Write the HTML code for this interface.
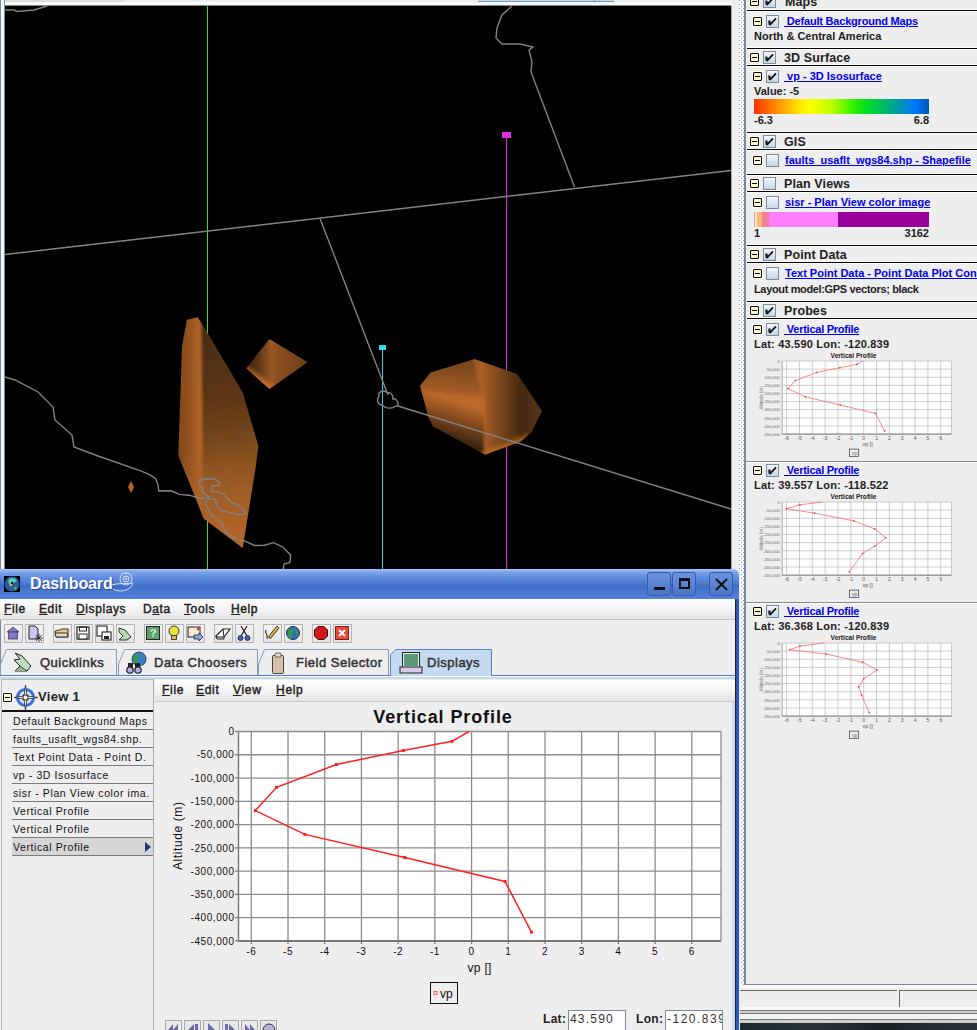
<!DOCTYPE html>
<html><head><meta charset="utf-8">
<style>
*{box-sizing:border-box;margin:0;padding:0}
html,body{width:977px;height:1030px;overflow:hidden;background:#eeeeee;font-family:"Liberation Sans",sans-serif;position:relative}
.a{position:absolute}
.t{position:absolute;white-space:nowrap;line-height:1}
.hl{position:absolute;left:746px;width:231px;height:2px;background:#222}
.mb{position:absolute;width:9px;height:9px;background:#fffcc8;border:1px solid #000;border-radius:1px;box-shadow:0 0 0 1px #fff}
.mb:after{content:"";position:absolute;left:1px;top:3px;width:5px;height:1px;background:#000}
.cb{position:absolute;width:13px;height:13px;border:1px solid #7d8c9b;background:linear-gradient(#f4f8fc,#c4d6e8)}
.ck:after{content:"";position:absolute;left:2px;top:2px;width:8px;height:8px;background:none}
.hdr{font-size:12.5px;font-weight:bold;color:#222;letter-spacing:0.1px}
.lnk{font-size:11px;font-weight:bold;color:#0000f0;text-decoration:underline}
.mnu{font-size:12px;font-weight:normal;-webkit-text-stroke:0.45px #222;color:#222;letter-spacing:0.6px}
.mnu2{font-size:12px;font-weight:normal;-webkit-text-stroke:0.45px #222;color:#222;letter-spacing:0.7px}
.tab{font-size:13px;font-weight:normal;-webkit-text-stroke:0.5px #333;color:#333;letter-spacing:0.5px}
.li{font-size:10.5px;color:#111;letter-spacing:0.6px}
.dsc{font-size:11px;font-weight:bold;color:#222}
</style></head><body>

<!-- top strip -->
<div class="a" style="left:0;top:0;width:746px;height:6px;background:#eeeeee"></div>
<div class="a" style="left:0;top:2px;width:746px;height:3px;background:#f8f8f8"></div>
<div class="a" style="left:0;top:0;width:125px;height:2px;background:#dcdcdc"></div>
<div class="a" style="left:478px;top:0;width:136px;height:2px;background:#c6d6ea;border-bottom:1px solid #7a9ac0"></div>
<div class="a" style="left:594px;top:0;width:1px;height:2px;background:#7a9ac0"></div>
<!-- left edge -->
<div class="a" style="left:0;top:0;width:5px;height:569px;background:#f6f6f6;border-right:1px solid #8a8a8a"></div>
<div class="a" style="left:0;top:0;width:1px;height:569px;background:#7a8a9a"></div>
<div class="a" style="left:4px;top:5px;width:727px;height:1px;background:#8a8a8a"></div>

<!-- 3D view -->
<svg class="a" style="left:5px;top:6px" width="726" height="563" viewBox="5 6 726 563">
<defs>
<linearGradient id="b1l" gradientUnits="userSpaceOnUse" x1="178" y1="0" x2="203" y2="0"><stop offset="0" stop-color="#80481a"/><stop offset="0.6" stop-color="#9c5822"/><stop offset="0.92" stop-color="#b86828"/><stop offset="1" stop-color="#a86026"/></linearGradient>
<linearGradient id="b1r" gradientUnits="userSpaceOnUse" x1="205" y1="340" x2="240" y2="545"><stop offset="0" stop-color="#4a2c12"/><stop offset="0.3" stop-color="#5e3616"/><stop offset="0.6" stop-color="#84501e"/><stop offset="1" stop-color="#b8682a"/></linearGradient>
<linearGradient id="b1b" gradientUnits="userSpaceOnUse" x1="0" y1="440" x2="0" y2="545"><stop offset="0" stop-color="#a05a24" stop-opacity="0"/><stop offset="1" stop-color="#b4662a" stop-opacity="0.85"/></linearGradient>
<linearGradient id="b2" gradientUnits="userSpaceOnUse" x1="246" y1="0" x2="308" y2="0"><stop offset="0" stop-color="#34220f"/><stop offset="0.2" stop-color="#5a3618"/><stop offset="0.42" stop-color="#9c5824"/><stop offset="0.52" stop-color="#8a5020"/><stop offset="1" stop-color="#6a401c"/></linearGradient>
<linearGradient id="b2v" gradientUnits="userSpaceOnUse" x1="257" y1="380" x2="262" y2="373"><stop offset="0" stop-color="#e07a2c" stop-opacity="0.95"/><stop offset="1" stop-color="#c06a2a" stop-opacity="0"/></linearGradient>
<linearGradient id="b4a" gradientUnits="userSpaceOnUse" x1="455" y1="364" x2="452" y2="399"><stop offset="0" stop-color="#7a481c"/><stop offset="0.75" stop-color="#a05a24"/><stop offset="1" stop-color="#c87030"/></linearGradient>
<linearGradient id="b4b" gradientUnits="userSpaceOnUse" x1="482" y1="0" x2="542" y2="0"><stop offset="0" stop-color="#a85e26"/><stop offset="0.3" stop-color="#7a461c"/><stop offset="0.66" stop-color="#44280f"/><stop offset="1" stop-color="#5a3618"/></linearGradient>
<linearGradient id="b4c" gradientUnits="userSpaceOnUse" x1="458" y1="401" x2="446" y2="440"><stop offset="0" stop-color="#c06a2a"/><stop offset="1" stop-color="#34200e"/></linearGradient>
<linearGradient id="b4d" gradientUnits="userSpaceOnUse" x1="500" y1="451" x2="497" y2="443"><stop offset="0" stop-color="#d8762c" stop-opacity="0.95"/><stop offset="1" stop-color="#c06a2a" stop-opacity="0"/></linearGradient>
<filter id="bl" x="-10%" y="-10%" width="120%" height="120%"><feGaussianBlur stdDeviation="1.6"/></filter>
<filter id="bls" x="-10%" y="-10%" width="120%" height="120%"><feGaussianBlur stdDeviation="0.8"/></filter>
<clipPath id="c1"><polygon points="186.8,319.7 197.8,317.3 207.5,333 242.7,392.5 258.4,445.9 256,465.3 242.7,547.9 203.8,518.7 178.3,455.6 182,346.4"/></clipPath>
<clipPath id="c2"><polygon points="269.4,339.1 307.7,362.2 269.4,388.9 246.3,368.3"/></clipPath>
<clipPath id="c4"><polygon points="420,385.7 430.7,372.6 474.5,359.1 517.5,374.2 542,411 531.3,432.5 520.5,441.7 485.2,454.8 433,426.4 428.4,417.2"/></clipPath>
</defs>
<rect x="5" y="6" width="726" height="563" fill="#000"/>
<line x1="207.5" y1="6" x2="207.5" y2="569" stroke="#2fe02f" stroke-width="1"/>
<line x1="382.5" y1="348" x2="382.5" y2="569" stroke="#30d0e0" stroke-width="1"/>
<rect x="379" y="345" width="7" height="5" fill="#30d8e8"/>
<line x1="506.5" y1="135" x2="506.5" y2="569" stroke="#e020e0" stroke-width="1"/>
<rect x="502" y="132" width="9" height="6" fill="#e030e0"/>
<g clip-path="url(#c1)"><g filter="url(#bl)">
<rect x="170" y="310" width="95" height="245" fill="#6a3c18"/>
<polygon points="170,300 197.8,300 207.5,333 242.7,392.5 270,445.9 270,465.3 250,560 203.8,530 170,455.6" fill="url(#b1r)"/>
<polygon points="170,300 199,300 201,325 203,505 203.8,530 170,470" fill="url(#b1l)"/>
<polygon points="203,440 270,440 270,560 203.8,560 170,480" fill="url(#b1b)"/>
</g></g>
<g clip-path="url(#c2)"><g filter="url(#bls)">
<rect x="240" y="330" width="75" height="65" fill="url(#b2)"/>
<rect x="240" y="330" width="75" height="65" fill="url(#b2v)"/>
</g></g>
<polygon points="131,481 134,487 131,493 128,487" fill="#b06428"/>
<g clip-path="url(#c4)"><g filter="url(#bl)">
<rect x="410" y="350" width="140" height="115" fill="#6a3c18"/>
<polygon points="474.5,350 550,350 550,411 540,440 520.5,460 485.2,470 485,402" fill="url(#b4b)"/>
<polygon points="410,385.7 410,350 474.5,350 485,402 428,396" fill="url(#b4a)"/>
<polygon points="410,385.7 428,396 485,402 485.2,470 410,440" fill="url(#b4c)"/>
<polygon points="475,459 530,440 525,430 485,446" fill="url(#b4d)"/>
<polyline points="474.5,359 485,402 485.2,455" fill="none" stroke="#b86a2a" stroke-width="1.6"/>
</g></g>
<g fill="none" stroke="#828282" stroke-width="1.4">
<polyline points="5,10 14,10 17,11.5 34,10 47,6"/>
<polyline points="5,254.5 731,170.5"/>
<polyline points="320,218.5 388,395"/>
<polyline points="574.5,187 531,72 532,62 529,50 533,47 520,44 502,44 496,38 497,28 502,15 512,6"/>
<polyline points="398,406 731,509"/>
<path d="M388,393 C382,389 378,392 379,396 C376,400 378,405 382,405 C386,409 392,409 396,406 L398,406 C399,402 396,398 393,399 C393,395 391,392 388,393 Z"/>
<polyline points="5,377 15,380 38,392 53,407 55,420 72,435 74,447 98,456 140,470.6 149.8,474.7 155.6,478.8 158,484.6 158.8,491 171.1,490.8 179.3,494.4 189.1,495.2 202.2,499 208.8,496.8 202.2,492 203,487.8 199,484.6 199,480.5 205.5,478.8 215.3,479.3 220.2,482.9 218.6,485.4 212,486.2 211.2,491.1 221.9,492.8 231.7,502.6 239.9,505.9 246.5,513.2 241.5,514.9 221.9,510.8 217,505.9 215.3,499.3 208.8,498.5 205.5,502.6 210.4,514 215.3,518.1 223.5,525.5 225.2,532 235,538.6 244.8,541.1 254.6,545.5 264.5,545.2 273.5,542.7 282.5,546.8 290.7,555 289.9,562.4 284.1,564 283.3,569"/>
</g>
</svg>

<!-- splitter between view and panel -->
<div class="a" style="left:731px;top:6px;width:1px;height:563px;background:#aaa"></div>
<div class="a" style="left:732px;top:0;width:7px;height:1030px;background:#eeeeee"></div>
<div class="a" style="left:739px;top:0;width:5px;height:987px;background:#f8f8f8"></div>
<svg class="a" style="left:739px;top:0" width="5" height="987"><defs><pattern id="dots" width="4" height="4" patternUnits="userSpaceOnUse"><rect x="0" y="0" width="1" height="1" fill="#8494aa"/><rect x="2" y="2" width="1" height="1" fill="#8494aa"/></pattern></defs><rect x="0" y="0" width="5" height="987" fill="url(#dots)"/></svg>
<div class="a" style="left:744px;top:0;width:2px;height:985px;background:#7a8898"></div>
<div class="a" style="left:744px;top:984px;width:233px;height:1px;background:#7a8898"></div>
<div class="a" style="left:739px;top:985px;width:238px;height:3px;background:#fafafa"></div>
<!-- status bar -->
<div class="a" style="left:739px;top:988px;width:238px;height:42px;background:#eeeeee"></div>
<div class="a" style="left:739px;top:990px;width:158px;height:1px;background:#6a6a6a"></div>
<div class="a" style="left:899px;top:990px;width:78px;height:1px;background:#6a6a6a"></div>
<div class="a" style="left:899px;top:990px;width:1px;height:17px;background:#6a6a6a"></div>
<div class="a" style="left:739px;top:1007px;width:238px;height:3px;background:#fafafa"></div>
<div class="a" style="left:739px;top:1010px;width:238px;height:1px;background:#777"></div>
<div class="a" style="left:739px;top:1011px;width:238px;height:2px;background:#d0d0d0"></div>
<div class="a" style="left:739px;top:1013px;width:238px;height:1px;background:#777"></div>
<div class="a" style="left:739px;top:1014px;width:238px;height:5px;background:#f2f2f2"></div>
<div class="a" style="left:739px;top:1019px;width:238px;height:1px;background:#777"></div>
<div class="a" style="left:739px;top:1020px;width:238px;height:3px;background:#cfcfcf"></div>
<div class="a" style="left:739px;top:1023px;width:238px;height:7px;background:linear-gradient(90deg,#1c2830,#28343a 30%,#1a2226 60%,#2a3438)"></div>
<!-- RIGHT PANEL -->
<div class="mb" style="left:750px;top:-3px"></div>
<div class="cb" style="left:763px;top:-5px"><svg width="11" height="11" style="position:absolute;left:0;top:0"><path d="M2.6,4.6 L2.9,8.9 L9,2.3" fill="none" stroke="#151515" stroke-width="1.8" stroke-linejoin="bevel"/><path d="M1.9,4.6 L2.1,8.6" stroke="#151515" stroke-width="1"/></svg></div>
<div class="t hdr" style="left:785px;top:-4.0px">Maps</div>
<div class="a" style="left:747px;top:9px;width:230px;height:3px;background:#fff"></div>
<div class="a" style="left:747px;top:10px;width:230px;height:1px;background:#000"></div>
<div class="mb" style="left:753px;top:17px"></div>
<div class="cb" style="left:766px;top:15px"><svg width="11" height="11" style="position:absolute;left:0;top:0"><path d="M2.6,4.6 L2.9,8.9 L9,2.3" fill="none" stroke="#151515" stroke-width="1.8" stroke-linejoin="bevel"/><path d="M1.9,4.6 L2.1,8.6" stroke="#151515" stroke-width="1"/></svg></div>
<div class="t lnk" style="left:784px;top:16.1px"><span style="letter-spacing:-0.2px">&nbsp;Default Background Maps</span></div>
<div class="t dsc" style="left:754px;top:31.1px">North &amp; Central America</div>
<div class="a" style="left:747px;top:47px;width:230px;height:3px;background:#fff"></div>
<div class="a" style="left:747px;top:48px;width:230px;height:1px;background:#000"></div>
<div class="mb" style="left:750px;top:53px"></div>
<div class="cb" style="left:763px;top:51px"><svg width="11" height="11" style="position:absolute;left:0;top:0"><path d="M2.6,4.6 L2.9,8.9 L9,2.3" fill="none" stroke="#151515" stroke-width="1.8" stroke-linejoin="bevel"/><path d="M1.9,4.6 L2.1,8.6" stroke="#151515" stroke-width="1"/></svg></div>
<div class="t hdr" style="left:784px;top:52.0px">3D Surface</div>
<div class="a" style="left:747px;top:64px;width:230px;height:3px;background:#fff"></div>
<div class="a" style="left:747px;top:65px;width:230px;height:1px;background:#000"></div>
<div class="mb" style="left:753px;top:72px"></div>
<div class="cb" style="left:766px;top:70px"><svg width="11" height="11" style="position:absolute;left:0;top:0"><path d="M2.6,4.6 L2.9,8.9 L9,2.3" fill="none" stroke="#151515" stroke-width="1.8" stroke-linejoin="bevel"/><path d="M1.9,4.6 L2.1,8.6" stroke="#151515" stroke-width="1"/></svg></div>
<div class="t lnk" style="left:784px;top:71.1px">&nbsp;vp - 3D Isosurface</div>
<div class="t dsc" style="left:754px;top:86.1px">Value: -5</div>
<div class="a" style="left:754px;top:99px;width:175px;height:15px;background:linear-gradient(90deg,#ff3000 0%,#ff6a00 8%,#ffaa00 17%,#ffee00 27%,#ffff00 32%,#b8ff00 45%,#30f000 57%,#00e020 64%,#00b078 77%,#0090c0 85%,#0078ff 92%,#0054b8 100%)"></div>
<div class="t dsc" style="left:754px;top:115.1px">-6.3</div>
<div class="t dsc" style="left:829px;top:115px;width:100px;text-align:right">6.8</div>
<div class="a" style="left:747px;top:131px;width:230px;height:3px;background:#fff"></div>
<div class="a" style="left:747px;top:132px;width:230px;height:1px;background:#000"></div>
<div class="mb" style="left:750px;top:137px"></div>
<div class="cb" style="left:763px;top:135px"><svg width="11" height="11" style="position:absolute;left:0;top:0"><path d="M2.6,4.6 L2.9,8.9 L9,2.3" fill="none" stroke="#151515" stroke-width="1.8" stroke-linejoin="bevel"/><path d="M1.9,4.6 L2.1,8.6" stroke="#151515" stroke-width="1"/></svg></div>
<div class="t hdr" style="left:784px;top:136.0px">GIS</div>
<div class="a" style="left:747px;top:148px;width:230px;height:3px;background:#fff"></div>
<div class="a" style="left:747px;top:149px;width:230px;height:1px;background:#000"></div>
<div class="mb" style="left:753px;top:156px"></div>
<div class="cb" style="left:766px;top:154px"></div>
<div class="t lnk" style="left:785px;top:155.1px">faults_usaflt_wgs84.shp - Shapefile</div>
<div class="a" style="left:747px;top:173px;width:230px;height:3px;background:#fff"></div>
<div class="a" style="left:747px;top:174px;width:230px;height:1px;background:#000"></div>
<div class="mb" style="left:750px;top:179px"></div>
<div class="cb" style="left:763px;top:177px"></div>
<div class="t hdr" style="left:784px;top:178.0px">Plan Views</div>
<div class="a" style="left:747px;top:190px;width:230px;height:3px;background:#fff"></div>
<div class="a" style="left:747px;top:191px;width:230px;height:1px;background:#000"></div>
<div class="mb" style="left:753px;top:198px"></div>
<div class="cb" style="left:766px;top:196px"></div>
<div class="t lnk" style="left:785px;top:197.1px">sisr - Plan View color image</div>
<div class="a" style="left:754px;top:212px;width:175px;height:15px;background:linear-gradient(90deg,#a8a8ff 0,#a8a8ff 1px,#ffe890 1px,#ffe890 3px,#ffb878 3px,#ffb878 8px,#f08098 8px,#f08098 15px,#ff80ff 15px,#ff80ff 84px,#990099 84px)"></div>
<div class="t dsc" style="left:754px;top:228.1px">1</div>
<div class="t dsc" style="left:829px;top:228px;width:100px;text-align:right">3162</div>
<div class="a" style="left:747px;top:244px;width:230px;height:3px;background:#fff"></div>
<div class="a" style="left:747px;top:245px;width:230px;height:1px;background:#000"></div>
<div class="mb" style="left:750px;top:250px"></div>
<div class="cb" style="left:763px;top:248px"><svg width="11" height="11" style="position:absolute;left:0;top:0"><path d="M2.6,4.6 L2.9,8.9 L9,2.3" fill="none" stroke="#151515" stroke-width="1.8" stroke-linejoin="bevel"/><path d="M1.9,4.6 L2.1,8.6" stroke="#151515" stroke-width="1"/></svg></div>
<div class="t hdr" style="left:784px;top:249.0px">Point Data</div>
<div class="a" style="left:747px;top:261px;width:230px;height:3px;background:#fff"></div>
<div class="a" style="left:747px;top:262px;width:230px;height:1px;background:#000"></div>
<div class="mb" style="left:753px;top:269px"></div>
<div class="cb" style="left:766px;top:267px"></div>
<div class="t lnk" style="left:785px;top:268.1px">Text Point Data - Point Data Plot Con...</div>
<div class="t dsc" style="left:754px;top:284.1px"><span style="letter-spacing:-0.35px">Layout model:GPS vectors; black</span></div>
<div class="a" style="left:747px;top:300px;width:230px;height:3px;background:#fff"></div>
<div class="a" style="left:747px;top:301px;width:230px;height:1px;background:#000"></div>
<div class="mb" style="left:750px;top:306px"></div>
<div class="cb" style="left:763px;top:304px"><svg width="11" height="11" style="position:absolute;left:0;top:0"><path d="M2.6,4.6 L2.9,8.9 L9,2.3" fill="none" stroke="#151515" stroke-width="1.8" stroke-linejoin="bevel"/><path d="M1.9,4.6 L2.1,8.6" stroke="#151515" stroke-width="1"/></svg></div>
<div class="t hdr" style="left:784px;top:305.0px">Probes</div>
<div class="a" style="left:747px;top:317px;width:230px;height:3px;background:#fff"></div>
<div class="a" style="left:747px;top:318px;width:230px;height:1px;background:#000"></div>
<div class="mb" style="left:753px;top:325px"></div>
<div class="cb" style="left:766px;top:323.3px"><svg width="11" height="11" style="position:absolute;left:0;top:0"><path d="M2.6,4.6 L2.9,8.9 L9,2.3" fill="none" stroke="#151515" stroke-width="1.8" stroke-linejoin="bevel"/><path d="M1.9,4.6 L2.1,8.6" stroke="#151515" stroke-width="1"/></svg></div>
<div class="t lnk" style="left:784px;top:323.5px"><span style="letter-spacing:-0.25px">&nbsp;Vertical Profile</span></div>
<div class="t dsc" style="left:754px;top:338.8px"><span style="letter-spacing:0.2px">Lat: 43.590 Lon: -120.839</span></div>
<svg class="a" style="left:746px;top:351.4px" width="231" height="110" viewBox="746 351.4 231 110">
<rect x="782.2" y="361.4" width="169.29999999999995" height="73.10000000000002" fill="#fff"/>
<line x1="782.2" y1="361.40" x2="951.5" y2="361.40" stroke="#a6a6a6" stroke-width="0.55"/>
<line x1="782.2" y1="369.52" x2="951.5" y2="369.52" stroke="#a6a6a6" stroke-width="0.55"/>
<line x1="782.2" y1="377.64" x2="951.5" y2="377.64" stroke="#a6a6a6" stroke-width="0.55"/>
<line x1="782.2" y1="385.77" x2="951.5" y2="385.77" stroke="#a6a6a6" stroke-width="0.55"/>
<line x1="782.2" y1="393.89" x2="951.5" y2="393.89" stroke="#a6a6a6" stroke-width="0.55"/>
<line x1="782.2" y1="402.01" x2="951.5" y2="402.01" stroke="#a6a6a6" stroke-width="0.55"/>
<line x1="782.2" y1="410.13" x2="951.5" y2="410.13" stroke="#a6a6a6" stroke-width="0.55"/>
<line x1="782.2" y1="418.26" x2="951.5" y2="418.26" stroke="#a6a6a6" stroke-width="0.55"/>
<line x1="782.2" y1="426.38" x2="951.5" y2="426.38" stroke="#a6a6a6" stroke-width="0.55"/>
<line x1="782.2" y1="434.50" x2="951.5" y2="434.50" stroke="#a6a6a6" stroke-width="0.55"/>
<line x1="786.60" y1="361.4" x2="786.60" y2="434.5" stroke="#a6a6a6" stroke-width="0.55"/>
<line x1="799.45" y1="361.4" x2="799.45" y2="434.5" stroke="#a6a6a6" stroke-width="0.55"/>
<line x1="812.30" y1="361.4" x2="812.30" y2="434.5" stroke="#a6a6a6" stroke-width="0.55"/>
<line x1="825.15" y1="361.4" x2="825.15" y2="434.5" stroke="#a6a6a6" stroke-width="0.55"/>
<line x1="838.00" y1="361.4" x2="838.00" y2="434.5" stroke="#a6a6a6" stroke-width="0.55"/>
<line x1="850.85" y1="361.4" x2="850.85" y2="434.5" stroke="#a6a6a6" stroke-width="0.55"/>
<line x1="863.70" y1="361.4" x2="863.70" y2="434.5" stroke="#a6a6a6" stroke-width="0.55"/>
<line x1="876.55" y1="361.4" x2="876.55" y2="434.5" stroke="#a6a6a6" stroke-width="0.55"/>
<line x1="889.40" y1="361.4" x2="889.40" y2="434.5" stroke="#a6a6a6" stroke-width="0.55"/>
<line x1="902.25" y1="361.4" x2="902.25" y2="434.5" stroke="#a6a6a6" stroke-width="0.55"/>
<line x1="915.10" y1="361.4" x2="915.10" y2="434.5" stroke="#a6a6a6" stroke-width="0.55"/>
<line x1="927.95" y1="361.4" x2="927.95" y2="434.5" stroke="#a6a6a6" stroke-width="0.55"/>
<line x1="940.80" y1="361.4" x2="940.80" y2="434.5" stroke="#a6a6a6" stroke-width="0.55"/>
<line x1="782.2" y1="434.5" x2="951.5" y2="434.5" stroke="#777" stroke-width="0.9"/>
<line x1="782.2" y1="361.4" x2="782.2" y2="434.5" stroke="#777" stroke-width="0.63"/>
<line x1="951.5" y1="361.4" x2="951.5" y2="434.5" stroke="#a6a6a6" stroke-width="0.55"/>
<polyline points="862.8,361.4 856.9,364.8 839.8,368.1 816.4,372.9 795.5,380.9 788.0,389.0 805.4,397.3 840.3,405.4 875.4,413.7 884.6,431.4" fill="none" stroke="#ff4a4a" stroke-width="0.65"/>
<rect x="856.2" y="364.1" width="1.4" height="1.4" fill="#ff2020"/>
<rect x="839.1" y="367.4" width="1.4" height="1.4" fill="#ff2020"/>
<rect x="815.7" y="372.2" width="1.4" height="1.4" fill="#ff2020"/>
<rect x="794.8" y="380.2" width="1.4" height="1.4" fill="#ff2020"/>
<rect x="787.3" y="388.3" width="1.4" height="1.4" fill="#ff2020"/>
<rect x="804.7" y="396.6" width="1.4" height="1.4" fill="#ff2020"/>
<rect x="839.6" y="404.7" width="1.4" height="1.4" fill="#ff2020"/>
<rect x="874.7" y="413.0" width="1.4" height="1.4" fill="#ff2020"/>
<rect x="883.9" y="430.7" width="1.4" height="1.4" fill="#ff2020"/>
<text x="853.5" y="358.0" text-anchor="middle" font-size="6.6px" font-weight="bold" fill="#222">Vertical Profile</text>
<text x="780" y="363.2" text-anchor="end" font-size="4.3px" fill="#666">0</text>
<text x="780" y="371.3" text-anchor="end" font-size="4.3px" fill="#666">-50,000</text>
<text x="780" y="379.4" text-anchor="end" font-size="4.3px" fill="#666">-100,000</text>
<text x="780" y="387.6" text-anchor="end" font-size="4.3px" fill="#666">-150,000</text>
<text x="780" y="395.7" text-anchor="end" font-size="4.3px" fill="#666">-200,000</text>
<text x="780" y="403.8" text-anchor="end" font-size="4.3px" fill="#666">-250,000</text>
<text x="780" y="411.9" text-anchor="end" font-size="4.3px" fill="#666">-300,000</text>
<text x="780" y="420.1" text-anchor="end" font-size="4.3px" fill="#666">-350,000</text>
<text x="780" y="428.2" text-anchor="end" font-size="4.3px" fill="#666">-400,000</text>
<text x="780" y="436.3" text-anchor="end" font-size="4.3px" fill="#666">-450,000</text>
<text x="786.6" y="440.1" text-anchor="middle" font-size="5px" fill="#555">-6</text>
<text x="799.5" y="440.1" text-anchor="middle" font-size="5px" fill="#555">-5</text>
<text x="812.3" y="440.1" text-anchor="middle" font-size="5px" fill="#555">-4</text>
<text x="825.1" y="440.1" text-anchor="middle" font-size="5px" fill="#555">-3</text>
<text x="838.0" y="440.1" text-anchor="middle" font-size="5px" fill="#555">-2</text>
<text x="850.9" y="440.1" text-anchor="middle" font-size="5px" fill="#555">-1</text>
<text x="863.7" y="440.1" text-anchor="middle" font-size="5px" fill="#555">0</text>
<text x="876.6" y="440.1" text-anchor="middle" font-size="5px" fill="#555">1</text>
<text x="889.4" y="440.1" text-anchor="middle" font-size="5px" fill="#555">2</text>
<text x="902.2" y="440.1" text-anchor="middle" font-size="5px" fill="#555">3</text>
<text x="915.1" y="440.1" text-anchor="middle" font-size="5px" fill="#555">4</text>
<text x="928.0" y="440.1" text-anchor="middle" font-size="5px" fill="#555">5</text>
<text x="940.8" y="440.1" text-anchor="middle" font-size="5px" fill="#555">6</text>
<text x="862.4" y="446.0" font-size="5.5px" fill="#555">vp []</text>
<text transform="translate(762.5,410.0) rotate(-90)" font-size="4.6px" fill="#777">Altitude (m)</text>
<rect x="849.5" y="449.5" width="9.2" height="7.2" fill="#eee" stroke="#333" stroke-width="0.7"/>
<text x="852" y="455.0" font-size="5px" fill="#666">vp</text>
</svg>
<div class="a" style="left:746px;top:461px;width:231px;height:2px;background:linear-gradient(#888 0,#888 1px,#fff 1px)"></div>
<div class="mb" style="left:753px;top:466px"></div>
<div class="cb" style="left:766px;top:464.3px"><svg width="11" height="11" style="position:absolute;left:0;top:0"><path d="M2.6,4.6 L2.9,8.9 L9,2.3" fill="none" stroke="#151515" stroke-width="1.8" stroke-linejoin="bevel"/><path d="M1.9,4.6 L2.1,8.6" stroke="#151515" stroke-width="1"/></svg></div>
<div class="t lnk" style="left:784px;top:464.5px"><span style="letter-spacing:-0.25px">&nbsp;Vertical Profile</span></div>
<div class="t dsc" style="left:754px;top:479.8px"><span style="letter-spacing:0.2px">Lat: 39.557 Lon: -118.522</span></div>
<svg class="a" style="left:746px;top:492.3px" width="231" height="110" viewBox="746 492.3 231 110">
<rect x="782.2" y="502.34999999999997" width="169.29999999999995" height="73.09999999999997" fill="#fff"/>
<line x1="782.2" y1="502.35" x2="951.5" y2="502.35" stroke="#a6a6a6" stroke-width="0.55"/>
<line x1="782.2" y1="510.47" x2="951.5" y2="510.47" stroke="#a6a6a6" stroke-width="0.55"/>
<line x1="782.2" y1="518.59" x2="951.5" y2="518.59" stroke="#a6a6a6" stroke-width="0.55"/>
<line x1="782.2" y1="526.72" x2="951.5" y2="526.72" stroke="#a6a6a6" stroke-width="0.55"/>
<line x1="782.2" y1="534.84" x2="951.5" y2="534.84" stroke="#a6a6a6" stroke-width="0.55"/>
<line x1="782.2" y1="542.96" x2="951.5" y2="542.96" stroke="#a6a6a6" stroke-width="0.55"/>
<line x1="782.2" y1="551.08" x2="951.5" y2="551.08" stroke="#a6a6a6" stroke-width="0.55"/>
<line x1="782.2" y1="559.21" x2="951.5" y2="559.21" stroke="#a6a6a6" stroke-width="0.55"/>
<line x1="782.2" y1="567.33" x2="951.5" y2="567.33" stroke="#a6a6a6" stroke-width="0.55"/>
<line x1="782.2" y1="575.45" x2="951.5" y2="575.45" stroke="#a6a6a6" stroke-width="0.55"/>
<line x1="786.60" y1="502.34999999999997" x2="786.60" y2="575.4499999999999" stroke="#a6a6a6" stroke-width="0.55"/>
<line x1="799.45" y1="502.34999999999997" x2="799.45" y2="575.4499999999999" stroke="#a6a6a6" stroke-width="0.55"/>
<line x1="812.30" y1="502.34999999999997" x2="812.30" y2="575.4499999999999" stroke="#a6a6a6" stroke-width="0.55"/>
<line x1="825.15" y1="502.34999999999997" x2="825.15" y2="575.4499999999999" stroke="#a6a6a6" stroke-width="0.55"/>
<line x1="838.00" y1="502.34999999999997" x2="838.00" y2="575.4499999999999" stroke="#a6a6a6" stroke-width="0.55"/>
<line x1="850.85" y1="502.34999999999997" x2="850.85" y2="575.4499999999999" stroke="#a6a6a6" stroke-width="0.55"/>
<line x1="863.70" y1="502.34999999999997" x2="863.70" y2="575.4499999999999" stroke="#a6a6a6" stroke-width="0.55"/>
<line x1="876.55" y1="502.34999999999997" x2="876.55" y2="575.4499999999999" stroke="#a6a6a6" stroke-width="0.55"/>
<line x1="889.40" y1="502.34999999999997" x2="889.40" y2="575.4499999999999" stroke="#a6a6a6" stroke-width="0.55"/>
<line x1="902.25" y1="502.34999999999997" x2="902.25" y2="575.4499999999999" stroke="#a6a6a6" stroke-width="0.55"/>
<line x1="915.10" y1="502.34999999999997" x2="915.10" y2="575.4499999999999" stroke="#a6a6a6" stroke-width="0.55"/>
<line x1="927.95" y1="502.34999999999997" x2="927.95" y2="575.4499999999999" stroke="#a6a6a6" stroke-width="0.55"/>
<line x1="940.80" y1="502.34999999999997" x2="940.80" y2="575.4499999999999" stroke="#a6a6a6" stroke-width="0.55"/>
<line x1="782.2" y1="575.4499999999999" x2="951.5" y2="575.4499999999999" stroke="#777" stroke-width="0.9"/>
<line x1="782.2" y1="502.34999999999997" x2="782.2" y2="575.4499999999999" stroke="#777" stroke-width="0.63"/>
<line x1="951.5" y1="502.34999999999997" x2="951.5" y2="575.4499999999999" stroke="#a6a6a6" stroke-width="0.55"/>
<polyline points="822.6,502.3 800.0,505.1 786.2,509.0 814.5,513.4 853.8,521.2 874.8,529.3 885.8,538.1 874.8,546.5 862.5,553.8 849.4,572.2" fill="none" stroke="#ff4a4a" stroke-width="0.65"/>
<rect x="799.3" y="504.4" width="1.4" height="1.4" fill="#ff2020"/>
<rect x="785.5" y="508.3" width="1.4" height="1.4" fill="#ff2020"/>
<rect x="813.8" y="512.7" width="1.4" height="1.4" fill="#ff2020"/>
<rect x="853.1" y="520.5" width="1.4" height="1.4" fill="#ff2020"/>
<rect x="874.1" y="528.6" width="1.4" height="1.4" fill="#ff2020"/>
<rect x="885.1" y="537.4" width="1.4" height="1.4" fill="#ff2020"/>
<rect x="874.1" y="545.8" width="1.4" height="1.4" fill="#ff2020"/>
<rect x="861.8" y="553.1" width="1.4" height="1.4" fill="#ff2020"/>
<rect x="848.7" y="571.5" width="1.4" height="1.4" fill="#ff2020"/>
<text x="853.5" y="498.9" text-anchor="middle" font-size="6.6px" font-weight="bold" fill="#222">Vertical Profile</text>
<text x="780" y="504.1" text-anchor="end" font-size="4.3px" fill="#666">0</text>
<text x="780" y="512.3" text-anchor="end" font-size="4.3px" fill="#666">-50,000</text>
<text x="780" y="520.4" text-anchor="end" font-size="4.3px" fill="#666">-100,000</text>
<text x="780" y="528.5" text-anchor="end" font-size="4.3px" fill="#666">-150,000</text>
<text x="780" y="536.6" text-anchor="end" font-size="4.3px" fill="#666">-200,000</text>
<text x="780" y="544.8" text-anchor="end" font-size="4.3px" fill="#666">-250,000</text>
<text x="780" y="552.9" text-anchor="end" font-size="4.3px" fill="#666">-300,000</text>
<text x="780" y="561.0" text-anchor="end" font-size="4.3px" fill="#666">-350,000</text>
<text x="780" y="569.1" text-anchor="end" font-size="4.3px" fill="#666">-400,000</text>
<text x="780" y="577.2" text-anchor="end" font-size="4.3px" fill="#666">-450,000</text>
<text x="786.6" y="581.0" text-anchor="middle" font-size="5px" fill="#555">-6</text>
<text x="799.5" y="581.0" text-anchor="middle" font-size="5px" fill="#555">-5</text>
<text x="812.3" y="581.0" text-anchor="middle" font-size="5px" fill="#555">-4</text>
<text x="825.1" y="581.0" text-anchor="middle" font-size="5px" fill="#555">-3</text>
<text x="838.0" y="581.0" text-anchor="middle" font-size="5px" fill="#555">-2</text>
<text x="850.9" y="581.0" text-anchor="middle" font-size="5px" fill="#555">-1</text>
<text x="863.7" y="581.0" text-anchor="middle" font-size="5px" fill="#555">0</text>
<text x="876.6" y="581.0" text-anchor="middle" font-size="5px" fill="#555">1</text>
<text x="889.4" y="581.0" text-anchor="middle" font-size="5px" fill="#555">2</text>
<text x="902.2" y="581.0" text-anchor="middle" font-size="5px" fill="#555">3</text>
<text x="915.1" y="581.0" text-anchor="middle" font-size="5px" fill="#555">4</text>
<text x="928.0" y="581.0" text-anchor="middle" font-size="5px" fill="#555">5</text>
<text x="940.8" y="581.0" text-anchor="middle" font-size="5px" fill="#555">6</text>
<text x="862.4" y="586.9" font-size="5.5px" fill="#555">vp []</text>
<text transform="translate(762.5,550.9) rotate(-90)" font-size="4.6px" fill="#777">Altitude (m)</text>
<rect x="849.5" y="590.4" width="9.2" height="7.2" fill="#eee" stroke="#333" stroke-width="0.7"/>
<text x="852" y="595.9" font-size="5px" fill="#666">vp</text>
</svg>
<div class="a" style="left:746px;top:602px;width:231px;height:2px;background:linear-gradient(#888 0,#888 1px,#fff 1px)"></div>
<div class="mb" style="left:753px;top:607px"></div>
<div class="cb" style="left:766px;top:605.3px"><svg width="11" height="11" style="position:absolute;left:0;top:0"><path d="M2.6,4.6 L2.9,8.9 L9,2.3" fill="none" stroke="#151515" stroke-width="1.8" stroke-linejoin="bevel"/><path d="M1.9,4.6 L2.1,8.6" stroke="#151515" stroke-width="1"/></svg></div>
<div class="t lnk" style="left:784px;top:605.5px"><span style="letter-spacing:-0.25px">&nbsp;Vertical Profile</span></div>
<div class="t dsc" style="left:754px;top:620.8000000000001px"><span style="letter-spacing:0.2px">Lat: 36.368 Lon: -120.839</span></div>
<svg class="a" style="left:746px;top:633.3px" width="231" height="110" viewBox="746 633.3 231 110">
<rect x="782.2" y="643.3" width="169.29999999999995" height="73.10000000000002" fill="#fff"/>
<line x1="782.2" y1="643.30" x2="951.5" y2="643.30" stroke="#a6a6a6" stroke-width="0.55"/>
<line x1="782.2" y1="651.42" x2="951.5" y2="651.42" stroke="#a6a6a6" stroke-width="0.55"/>
<line x1="782.2" y1="659.54" x2="951.5" y2="659.54" stroke="#a6a6a6" stroke-width="0.55"/>
<line x1="782.2" y1="667.67" x2="951.5" y2="667.67" stroke="#a6a6a6" stroke-width="0.55"/>
<line x1="782.2" y1="675.79" x2="951.5" y2="675.79" stroke="#a6a6a6" stroke-width="0.55"/>
<line x1="782.2" y1="683.91" x2="951.5" y2="683.91" stroke="#a6a6a6" stroke-width="0.55"/>
<line x1="782.2" y1="692.03" x2="951.5" y2="692.03" stroke="#a6a6a6" stroke-width="0.55"/>
<line x1="782.2" y1="700.16" x2="951.5" y2="700.16" stroke="#a6a6a6" stroke-width="0.55"/>
<line x1="782.2" y1="708.28" x2="951.5" y2="708.28" stroke="#a6a6a6" stroke-width="0.55"/>
<line x1="782.2" y1="716.40" x2="951.5" y2="716.40" stroke="#a6a6a6" stroke-width="0.55"/>
<line x1="786.60" y1="643.3" x2="786.60" y2="716.4" stroke="#a6a6a6" stroke-width="0.55"/>
<line x1="799.45" y1="643.3" x2="799.45" y2="716.4" stroke="#a6a6a6" stroke-width="0.55"/>
<line x1="812.30" y1="643.3" x2="812.30" y2="716.4" stroke="#a6a6a6" stroke-width="0.55"/>
<line x1="825.15" y1="643.3" x2="825.15" y2="716.4" stroke="#a6a6a6" stroke-width="0.55"/>
<line x1="838.00" y1="643.3" x2="838.00" y2="716.4" stroke="#a6a6a6" stroke-width="0.55"/>
<line x1="850.85" y1="643.3" x2="850.85" y2="716.4" stroke="#a6a6a6" stroke-width="0.55"/>
<line x1="863.70" y1="643.3" x2="863.70" y2="716.4" stroke="#a6a6a6" stroke-width="0.55"/>
<line x1="876.55" y1="643.3" x2="876.55" y2="716.4" stroke="#a6a6a6" stroke-width="0.55"/>
<line x1="889.40" y1="643.3" x2="889.40" y2="716.4" stroke="#a6a6a6" stroke-width="0.55"/>
<line x1="902.25" y1="643.3" x2="902.25" y2="716.4" stroke="#a6a6a6" stroke-width="0.55"/>
<line x1="915.10" y1="643.3" x2="915.10" y2="716.4" stroke="#a6a6a6" stroke-width="0.55"/>
<line x1="927.95" y1="643.3" x2="927.95" y2="716.4" stroke="#a6a6a6" stroke-width="0.55"/>
<line x1="940.80" y1="643.3" x2="940.80" y2="716.4" stroke="#a6a6a6" stroke-width="0.55"/>
<line x1="782.2" y1="716.4" x2="951.5" y2="716.4" stroke="#777" stroke-width="0.9"/>
<line x1="782.2" y1="643.3" x2="782.2" y2="716.4" stroke="#777" stroke-width="0.63"/>
<line x1="951.5" y1="643.3" x2="951.5" y2="716.4" stroke="#a6a6a6" stroke-width="0.55"/>
<polyline points="823.9,643.3 800.0,646.4 789.7,650.0 826.0,654.3 862.5,662.5 877.1,670.3 863.7,679.0 858.7,687.2 861.6,695.4 869.2,712.8" fill="none" stroke="#ff4a4a" stroke-width="0.65"/>
<rect x="799.3" y="645.7" width="1.4" height="1.4" fill="#ff2020"/>
<rect x="789.0" y="649.3" width="1.4" height="1.4" fill="#ff2020"/>
<rect x="825.3" y="653.6" width="1.4" height="1.4" fill="#ff2020"/>
<rect x="861.8" y="661.8" width="1.4" height="1.4" fill="#ff2020"/>
<rect x="876.4" y="669.6" width="1.4" height="1.4" fill="#ff2020"/>
<rect x="863.0" y="678.3" width="1.4" height="1.4" fill="#ff2020"/>
<rect x="858.0" y="686.5" width="1.4" height="1.4" fill="#ff2020"/>
<rect x="860.9" y="694.7" width="1.4" height="1.4" fill="#ff2020"/>
<rect x="868.5" y="712.1" width="1.4" height="1.4" fill="#ff2020"/>
<text x="853.5" y="639.9" text-anchor="middle" font-size="6.6px" font-weight="bold" fill="#222">Vertical Profile</text>
<text x="780" y="645.1" text-anchor="end" font-size="4.3px" fill="#666">0</text>
<text x="780" y="653.2" text-anchor="end" font-size="4.3px" fill="#666">-50,000</text>
<text x="780" y="661.3" text-anchor="end" font-size="4.3px" fill="#666">-100,000</text>
<text x="780" y="669.5" text-anchor="end" font-size="4.3px" fill="#666">-150,000</text>
<text x="780" y="677.6" text-anchor="end" font-size="4.3px" fill="#666">-200,000</text>
<text x="780" y="685.7" text-anchor="end" font-size="4.3px" fill="#666">-250,000</text>
<text x="780" y="693.8" text-anchor="end" font-size="4.3px" fill="#666">-300,000</text>
<text x="780" y="702.0" text-anchor="end" font-size="4.3px" fill="#666">-350,000</text>
<text x="780" y="710.1" text-anchor="end" font-size="4.3px" fill="#666">-400,000</text>
<text x="780" y="718.2" text-anchor="end" font-size="4.3px" fill="#666">-450,000</text>
<text x="786.6" y="722.0" text-anchor="middle" font-size="5px" fill="#555">-6</text>
<text x="799.5" y="722.0" text-anchor="middle" font-size="5px" fill="#555">-5</text>
<text x="812.3" y="722.0" text-anchor="middle" font-size="5px" fill="#555">-4</text>
<text x="825.1" y="722.0" text-anchor="middle" font-size="5px" fill="#555">-3</text>
<text x="838.0" y="722.0" text-anchor="middle" font-size="5px" fill="#555">-2</text>
<text x="850.9" y="722.0" text-anchor="middle" font-size="5px" fill="#555">-1</text>
<text x="863.7" y="722.0" text-anchor="middle" font-size="5px" fill="#555">0</text>
<text x="876.6" y="722.0" text-anchor="middle" font-size="5px" fill="#555">1</text>
<text x="889.4" y="722.0" text-anchor="middle" font-size="5px" fill="#555">2</text>
<text x="902.2" y="722.0" text-anchor="middle" font-size="5px" fill="#555">3</text>
<text x="915.1" y="722.0" text-anchor="middle" font-size="5px" fill="#555">4</text>
<text x="928.0" y="722.0" text-anchor="middle" font-size="5px" fill="#555">5</text>
<text x="940.8" y="722.0" text-anchor="middle" font-size="5px" fill="#555">6</text>
<text x="862.4" y="727.9" font-size="5.5px" fill="#555">vp []</text>
<text transform="translate(762.5,691.9) rotate(-90)" font-size="4.6px" fill="#777">Altitude (m)</text>
<rect x="849.5" y="731.4" width="9.2" height="7.2" fill="#eee" stroke="#333" stroke-width="0.7"/>
<text x="852" y="736.9" font-size="5px" fill="#666">vp</text>
</svg>

<!-- DASHBOARD -->
<div id="db"></div>
<!-- window frame -->
<div class="a" style="left:0;top:569px;width:740px;height:461px;background:#eeeeee"></div>
<div class="a" style="left:734.5px;top:575px;width:4.5px;height:455px;background:linear-gradient(90deg,#222 0,#222 1px,#2a58b8 1px,#2a58b8 3.8px,#333 3.8px)"></div>
<div class="a" style="left:732px;top:677px;width:2.5px;height:353px;background:#c8dcf2"></div>
<!-- title bar -->
<div class="a" style="left:0;top:569px;width:739px;height:30px;border-top-right-radius:6px;background:linear-gradient(#a8c4f4 0px,#7ea4ea 3px,#5f8ade 9px,#4e7bd4 14px,#3e6bc4 17px,#4a78d0 22px,#5382d8 30px)"></div>
<svg class="a" style="left:4px;top:576px" width="16" height="16"><rect x="0" y="0" width="16" height="16" fill="#000"/><circle cx="8" cy="8" r="7.5" fill="#2a5aa8"/><path d="M5,3 C8,1 12,2 13,5 C11,7 9,6 8,9 C7,12 6,10 5,8 C4,6 4,4 5,3Z" fill="#30d8c8"/><path d="M6,5 L9,5 L8,10 L6,10Z" fill="#f0b020"/><path d="M10,11 C12,10 14,12 12,14 C10,14 9,12 10,11Z" fill="#40c040"/><circle cx="8" cy="7" r="1.2" fill="#111"/></svg>
<div class="t" style="left:30px;top:576px;font-size:16px;font-weight:bold;color:#fff;text-shadow:1px 1px 1px #2a4a90;letter-spacing:-0.1px">Dashboard</div>
<svg class="a" style="left:111px;top:571px" width="24" height="26"><g fill="none" stroke="#d8e4f8" stroke-width="1"><circle cx="15" cy="8" r="6"/><circle cx="15" cy="8" r="3"/><circle cx="15" cy="8" r="1"/><path d="M1,14 C6,12 14,13 22,12 C20,20 8,22 2,18"/></g></svg>
<div class="a" style="left:647px;top:572px;width:24px;height:24px;border:1px solid #3a5aa8;border-radius:3px;background:linear-gradient(#6a94e0,#4a74c8)"><div class="a" style="left:6px;top:14px;width:11px;height:3px;background:#111"></div></div>
<div class="a" style="left:672px;top:572px;width:24px;height:24px;border:1px solid #3a5aa8;border-radius:3px;background:linear-gradient(#6a94e0,#4a74c8)"><div class="a" style="left:6px;top:5px;width:11px;height:11px;border:2px solid #111;border-top-width:3px"></div></div>
<div class="a" style="left:709px;top:572px;width:24px;height:24px;border:1px solid #3a5aa8;border-radius:3px;background:linear-gradient(#6a94e0,#4a74c8)"><svg class="a" style="left:5px;top:5px" width="13" height="13"><path d="M1,1 L12,12 M12,1 L1,12" stroke="#111" stroke-width="1.8"/></svg></div>
<div class="a" style="left:0;top:599px;width:1px;height:78px;background:#7a8aa0"></div>
<!-- menu bar -->
<div class="a" style="left:0;top:599px;width:735px;height:21px;background:linear-gradient(#ffffff,#f6f6f6 40%,#e4e4e4);border-bottom:1px solid #c4c4c4"></div>
<div class="t mnu" style="left:4px;top:603px"><u>F</u>ile</div>
<div class="t mnu" style="left:39px;top:603px"><u>E</u>dit</div>
<div class="t mnu" style="left:76px;top:603px"><u>D</u>isplays</div>
<div class="t mnu" style="left:143px;top:603px">D<u>a</u>ta</div>
<div class="t mnu" style="left:184px;top:603px"><u>T</u>ools</div>
<div class="t mnu" style="left:231px;top:603px"><u>H</u>elp</div>
<!-- toolbar -->
<div class="a" style="left:4px;top:624px;width:19px;height:19px;border:1px solid #b4b4b4;background:linear-gradient(#f4f4f4,#e4e4e4)"></div>
<svg class="a" style="left:4px;top:624px" width="19" height="19"><path d="M3,8 L9,3 L15,8Z" fill="#8078c0" stroke="#403870" stroke-width="0.8"/><rect x="4.5" y="8" width="9" height="7" fill="#8078c0" stroke="#403870" stroke-width="0.8"/></svg>
<div class="a" style="left:25px;top:624px;width:19px;height:19px;border:1px solid #b4b4b4;background:linear-gradient(#f4f4f4,#e4e4e4)"></div>
<svg class="a" style="left:25px;top:624px" width="19" height="19"><path d="M4,2 L10,2 L13,5 L13,15 L4,15Z" fill="#c8c8f0" stroke="#222" stroke-width="1"/><path d="M11,11 L17,17 M17,11 L11,17 M14,10 L14,18 M10,14 L18,14" stroke="#222" stroke-width="0.8"/></svg>
<div class="a" style="left:53px;top:624px;width:19px;height:19px;border:1px solid #b4b4b4;background:linear-gradient(#f4f4f4,#e4e4e4)"></div>
<svg class="a" style="left:53px;top:624px" width="19" height="19"><path d="M2,7 L7,6 L9,5 L15,5 L15,13 L3,13Z" fill="#f0c890" stroke="#222" stroke-width="0.9"/><path d="M2,9 L14,9 L15,13 L3,13Z" fill="#e8d8c0" stroke="#222" stroke-width="0.9"/></svg>
<div class="a" style="left:74px;top:624px;width:19px;height:19px;border:1px solid #b4b4b4;background:linear-gradient(#f4f4f4,#e4e4e4)"></div>
<svg class="a" style="left:74px;top:624px" width="19" height="19"><rect x="3" y="3" width="12" height="12" fill="#fff" stroke="#222" stroke-width="1.2"/><rect x="5.5" y="3" width="7" height="4" fill="none" stroke="#222" stroke-width="1"/><rect x="5" y="10" width="8" height="5" fill="#fff" stroke="#222" stroke-width="1"/></svg>
<div class="a" style="left:95px;top:624px;width:19px;height:19px;border:1px solid #b4b4b4;background:linear-gradient(#f4f4f4,#e4e4e4)"></div>
<svg class="a" style="left:95px;top:624px" width="19" height="19"><rect x="2" y="2" width="10" height="10" fill="#fff" stroke="#222" stroke-width="1.1"/><rect x="7" y="8" width="9" height="8" fill="#fff" stroke="#222" stroke-width="1.1"/><rect x="9" y="12" width="5" height="3" fill="#222"/></svg>
<div class="a" style="left:116px;top:624px;width:19px;height:19px;border:1px solid #b4b4b4;background:linear-gradient(#f4f4f4,#e4e4e4)"></div>
<svg class="a" style="left:116px;top:624px" width="19" height="19"><path d="M3,4 L9,6 L15,13 L11,16 L3,16 L7,12 L3,8Z" fill="#b8d8b8" stroke="#222" stroke-width="0.9"/></svg>
<div class="a" style="left:144px;top:624px;width:19px;height:19px;border:1px solid #b4b4b4;background:linear-gradient(#f4f4f4,#e4e4e4)"></div>
<svg class="a" style="left:144px;top:624px" width="19" height="19"><rect x="2.5" y="2.5" width="13" height="13" fill="#60a070" stroke="#222" stroke-width="1"/><text x="9" y="13" text-anchor="middle" font-size="11px" font-weight="bold" fill="#d0f0d0">?</text></svg>
<div class="a" style="left:165px;top:624px;width:19px;height:19px;border:1px solid #b4b4b4;background:linear-gradient(#f4f4f4,#e4e4e4)"></div>
<svg class="a" style="left:165px;top:624px" width="19" height="19"><circle cx="9" cy="7" r="5" fill="#f0e040" stroke="#222" stroke-width="0.9"/><rect x="6.5" y="11.5" width="5" height="4" fill="#e0b060" stroke="#222" stroke-width="0.8"/></svg>
<div class="a" style="left:186px;top:624px;width:19px;height:19px;border:1px solid #b4b4b4;background:linear-gradient(#f4f4f4,#e4e4e4)"></div>
<svg class="a" style="left:186px;top:624px" width="19" height="19"><rect x="2" y="3" width="12" height="10" fill="#f0e8d0" stroke="#222" stroke-width="1"/><path d="M8,11 L13,11 L13,9 L17,13 L13,17 L13,15 L8,15Z" fill="#8aa8e8" stroke="#222" stroke-width="0.8"/><rect x="11" y="4" width="2" height="2" fill="#d02020"/></svg>
<div class="a" style="left:214px;top:624px;width:19px;height:19px;border:1px solid #b4b4b4;background:linear-gradient(#f4f4f4,#e4e4e4)"></div>
<svg class="a" style="left:214px;top:624px" width="19" height="19"><path d="M2,12 L9,5 L16,5 L10,13 L2,13Z" fill="#fff" stroke="#222" stroke-width="1.1"/><path d="M9,5 L10,13 M2,12 L3,15 L10,15 L10,13" fill="none" stroke="#222" stroke-width="1"/></svg>
<div class="a" style="left:235px;top:624px;width:19px;height:19px;border:1px solid #b4b4b4;background:linear-gradient(#f4f4f4,#e4e4e4)"></div>
<svg class="a" style="left:235px;top:624px" width="19" height="19"><path d="M6,2 L12,12 M12,2 L6,12" stroke="#222" stroke-width="1.3"/><circle cx="5.5" cy="14" r="2.5" fill="#4060d0" stroke="#222" stroke-width="0.8"/><circle cx="12.5" cy="14" r="2.5" fill="#4060d0" stroke="#222" stroke-width="0.8"/></svg>
<div class="a" style="left:263px;top:624px;width:19px;height:19px;border:1px solid #b4b4b4;background:linear-gradient(#f4f4f4,#e4e4e4)"></div>
<svg class="a" style="left:263px;top:624px" width="19" height="19"><path d="M14,2 L16,4 L8,14 L6,14 L6,12Z" fill="#f0b040" stroke="#222" stroke-width="0.9"/><path d="M3,6 C1,10 6,10 4,15" fill="none" stroke="#222" stroke-width="1.1"/></svg>
<div class="a" style="left:284px;top:624px;width:19px;height:19px;border:1px solid #b4b4b4;background:linear-gradient(#f4f4f4,#e4e4e4)"></div>
<svg class="a" style="left:284px;top:624px" width="19" height="19"><circle cx="9" cy="9" r="6.5" fill="#3070c0" stroke="#222" stroke-width="0.9"/><path d="M5,5 C8,4 10,7 8,9 C6,11 9,13 7,15 C4,13 3,9 5,5Z M11,4 C14,6 15,9 13,12 C11,11 12,8 11,4Z" fill="#30a040"/></svg>
<div class="a" style="left:312px;top:624px;width:19px;height:19px;border:1px solid #b4b4b4;background:linear-gradient(#f4f4f4,#e4e4e4)"></div>
<svg class="a" style="left:312px;top:624px" width="19" height="19"><path d="M6,2.5 L12,2.5 L15.5,6 L15.5,12 L12,15.5 L6,15.5 L2.5,12 L2.5,6Z" fill="#d01818" stroke="#400" stroke-width="1"/></svg>
<div class="a" style="left:333px;top:624px;width:19px;height:19px;border:1px solid #b4b4b4;background:linear-gradient(#f4f4f4,#e4e4e4)"></div>
<svg class="a" style="left:333px;top:624px" width="19" height="19"><rect x="2.5" y="2.5" width="13" height="13" fill="#e84838" stroke="#802018" stroke-width="1"/><path d="M6,6 L12,12 M12,6 L6,12" stroke="#fff" stroke-width="2"/></svg>
<!-- tabs -->
<svg class="a" style="left:0;top:648px" width="735" height="32">
<path d="M0.5,27.5 L0.5,16 L6.5,1.5 L116.5,1.5 L116.5,27.5" fill="#eeeeee" stroke="#8a9ab8" stroke-width="1"/>
<path d="M118.5,27.5 L118.5,16 L124.5,1.5 L257.5,1.5 L257.5,27.5" fill="#eeeeee" stroke="#8a9ab8" stroke-width="1"/>
<path d="M258.5,27.5 L258.5,16 L264.5,1.5 L388.5,1.5 L388.5,27.5" fill="#eeeeee" stroke="#8a9ab8" stroke-width="1"/>
<rect x="0" y="27" width="735" height="2" fill="#ffffff"/>
<rect x="0" y="29" width="735" height="2" fill="#c4daf0"/>
<line x1="0" y1="27.5" x2="735" y2="27.5" stroke="#5a7ccc" stroke-width="1"/>
<path d="M390.5,28 L390.5,7 L395.5,1.5 L491.5,1.5 L491.5,28 Z" fill="#c4daf0" stroke="none"/>
<path d="M390.5,28 L390.5,7 L395.5,1.5 L491.5,1.5 L491.5,27.5 L735,27.5" fill="none" stroke="#5a7ccc" stroke-width="1"/>
</svg>
<div class="t tab" style="left:40px;top:655.5px">Quicklinks</div>
<div class="t tab" style="left:154px;top:655.5px">Data Choosers</div>
<div class="t tab" style="left:296px;top:655.5px">Field Selector</div>
<div class="t tab" style="left:427px;top:655.5px">Displays</div>
<svg class="a" style="left:12px;top:651px" width="22" height="22"><path d="M3,2 L10,5 L19,15 L15,20 L3,20 L8,15 L2,9 L8,8Z" fill="#c0dcc0" stroke="#222" stroke-width="1"/><path d="M3,20 L8,15 L15,20" fill="#90b890" stroke="#222" stroke-width="0.8"/></svg>
<svg class="a" style="left:125px;top:650px" width="22" height="24"><circle cx="14" cy="9" r="7" fill="#3a80c8" stroke="#222" stroke-width="0.8"/><path d="M9,5 C12,3 15,6 13,9 C11,12 15,13 12,16 C9,14 8,9 9,5Z" fill="#30a040"/><rect x="3" y="13" width="5" height="5" fill="#222"/><rect x="10" y="13" width="5" height="5" fill="#222"/><circle cx="5" cy="20" r="3.2" fill="#b0b0e0" stroke="#222" stroke-width="1.2"/><circle cx="13" cy="20" r="3.2" fill="#b0b0e0" stroke="#222" stroke-width="1.2"/></svg>
<svg class="a" style="left:270px;top:651px" width="16" height="24"><rect x="2.5" y="4.5" width="11" height="18" rx="1" fill="#d8c0a8" stroke="#444" stroke-width="1"/><rect x="5" y="2" width="6" height="4" rx="1" fill="#ddd" stroke="#444" stroke-width="0.8"/></svg>
<svg class="a" style="left:399px;top:651px" width="24" height="23"><rect x="3.5" y="1.5" width="17" height="15" fill="#eee" stroke="#222" stroke-width="1"/><rect x="5" y="3" width="14" height="12" fill="#5a9a7a"/><rect x="1" y="16" width="22" height="6" fill="#d8c8e8" stroke="#222" stroke-width="1"/></svg>
<!-- left list -->
<div class="a" style="left:1px;top:679px;width:153px;height:351px;border-left:1px solid #b8b8b8;border-top:1px solid #b8b8b8;border-right:1px solid #a8a8a8;background:#eeeeee"></div>
<div class="mb" style="left:3px;top:693px"></div>
<svg class="a" style="left:14px;top:685px" width="24" height="25"><circle cx="11.5" cy="12.5" r="8" fill="none" stroke="#3a6ee0" stroke-width="3"/><path d="M11.5,0 L13,11 L24,12.5 L13,14 L11.5,25 L10,14 L0,12.5 L10,11Z" fill="#f8f8f8" stroke="#222" stroke-width="0.8"/><rect x="9" y="10" width="5" height="5" fill="none" stroke="#222" stroke-width="0.8"/></svg>
<div class="t" style="left:38px;top:690px;font-size:13px;font-weight:bold;color:#222;letter-spacing:0.3px">View 1</div>
<div class="a" style="left:2px;top:710px;width:151px;height:2px;background:#111"></div>
<div class="a" style="left:12px;top:838px;width:141px;height:17px;background:#d6d6d6"></div>
<div class="t li" style="left:13px;top:716.0px">Default Background Maps</div>
<div class="a" style="left:12px;top:729.0px;width:141px;height:1px;background:#7a7a7a"></div>
<div class="t li" style="left:13px;top:734.0px">faults_usaflt_wgs84.shp.</div>
<div class="a" style="left:12px;top:747.0px;width:141px;height:1px;background:#7a7a7a"></div>
<div class="t li" style="left:13px;top:752.0px">Text Point Data - Point D.</div>
<div class="a" style="left:12px;top:765.0px;width:141px;height:1px;background:#7a7a7a"></div>
<div class="t li" style="left:13px;top:770.0px">vp - 3D Isosurface</div>
<div class="a" style="left:12px;top:783.0px;width:141px;height:1px;background:#7a7a7a"></div>
<div class="t li" style="left:13px;top:788.0px">sisr - Plan View color ima.</div>
<div class="a" style="left:12px;top:801.0px;width:141px;height:1px;background:#7a7a7a"></div>
<div class="t li" style="left:13px;top:806.0px">Vertical Profile</div>
<div class="a" style="left:12px;top:819.0px;width:141px;height:1px;background:#7a7a7a"></div>
<div class="t li" style="left:13px;top:824.0px">Vertical Profile</div>
<div class="a" style="left:12px;top:837.0px;width:141px;height:1px;background:#7a7a7a"></div>
<div class="t li" style="left:13px;top:842.0px">Vertical Profile</div>
<div class="a" style="left:12px;top:855.0px;width:141px;height:1px;background:#7a7a7a"></div>
<svg class="a" style="left:144px;top:841px" width="8" height="12"><path d="M1,1 L7,6 L1,11Z" fill="#1a3a78"/></svg>
<div class="a" style="left:165px;top:1020px;width:17px;height:12px;border:1px solid #a8a8a8;background:#e8e8e8"></div>
<div class="a" style="left:184px;top:1020px;width:17px;height:12px;border:1px solid #a8a8a8;background:#e8e8e8"></div>
<div class="a" style="left:203px;top:1020px;width:17px;height:12px;border:1px solid #a8a8a8;background:#e8e8e8"></div>
<div class="a" style="left:222px;top:1020px;width:17px;height:12px;border:1px solid #a8a8a8;background:#e8e8e8"></div>
<div class="a" style="left:241px;top:1020px;width:17px;height:12px;border:1px solid #a8a8a8;background:#e8e8e8"></div>
<div class="a" style="left:260px;top:1020px;width:17px;height:12px;border:1px solid #a8a8a8;background:#e8e8e8"></div>
<svg class="a" style="left:165px;top:1020px" width="115" height="10" fill="#6a6aa8"><path d="M3,10 L8,4 L8,10Z M8,10 L13,4 L13,10Z"/><path d="M23,10 L29,4 L29,10Z"/><rect x="30" y="4" width="3" height="6"/><path d="M43,3 L50,10 L43,10Z"/><rect x="60" y="4" width="3" height="6"/><path d="M64,4 L70,10 L64,10Z"/><path d="M80,4 L85,10 L80,10Z M85,4 L90,10 L85,10Z"/><circle cx="104" cy="10" r="6" fill="#b8b0d8" stroke="#333" stroke-width="1"/></svg>
<div class="t" style="left:543px;top:1013px;font-size:12px;font-weight:bold;color:#222;letter-spacing:0.3px">Lat:</div>
<div class="a" style="left:568px;top:1010px;width:58px;height:22px;border:1px solid #7a8aa0;background:#fff"></div>
<div class="t" style="left:570px;top:1013px;font-size:12px;color:#333;letter-spacing:1.2px">43.590</div>
<div class="t" style="left:636px;top:1013px;font-size:12px;font-weight:bold;color:#222;letter-spacing:0.3px">Lon:</div>
<div class="a" style="left:665px;top:1010px;width:58px;height:22px;border:1px solid #7a8aa0;background:#fff;overflow:hidden"><div class="t" style="left:1px;top:2px;font-size:12px;color:#333;letter-spacing:1.5px">-120.839</div></div>
<!-- right display panel -->
<div class="a" style="left:155px;top:680px;width:580px;height:22px;background:linear-gradient(#ffffff,#f4f4f4 50%,#e2e2e2);border-bottom:1px solid #c8c8c8"></div>
<div class="t mnu2" style="left:162px;top:684px"><u>F</u>ile</div>
<div class="t mnu2" style="left:196px;top:684px"><u>E</u>dit</div>
<div class="t mnu2" style="left:233px;top:684px"><u>V</u>iew</div>
<div class="t mnu2" style="left:276px;top:684px"><u>H</u>elp</div>
<svg class="a" style="left:155px;top:703px" width="580" height="327" viewBox="155 703 580 327">
<rect x="238.5" y="731.5" width="482.5" height="209.39999999999998" fill="#fff"/>
<line x1="238.5" y1="731.50" x2="721" y2="731.50" stroke="#8c8c8c" stroke-width="1.3"/>
<line x1="238.5" y1="754.77" x2="721" y2="754.77" stroke="#8c8c8c" stroke-width="1.3"/>
<line x1="238.5" y1="778.04" x2="721" y2="778.04" stroke="#8c8c8c" stroke-width="1.3"/>
<line x1="238.5" y1="801.31" x2="721" y2="801.31" stroke="#8c8c8c" stroke-width="1.3"/>
<line x1="238.5" y1="824.58" x2="721" y2="824.58" stroke="#8c8c8c" stroke-width="1.3"/>
<line x1="238.5" y1="847.85" x2="721" y2="847.85" stroke="#8c8c8c" stroke-width="1.3"/>
<line x1="238.5" y1="871.12" x2="721" y2="871.12" stroke="#8c8c8c" stroke-width="1.3"/>
<line x1="238.5" y1="894.39" x2="721" y2="894.39" stroke="#8c8c8c" stroke-width="1.3"/>
<line x1="238.5" y1="917.66" x2="721" y2="917.66" stroke="#8c8c8c" stroke-width="1.3"/>
<line x1="238.5" y1="940.93" x2="721" y2="940.93" stroke="#8c8c8c" stroke-width="1.3"/>
<line x1="251.30" y1="731.5" x2="251.30" y2="940.9" stroke="#8c8c8c" stroke-width="1.3"/>
<line x1="288.01" y1="731.5" x2="288.01" y2="940.9" stroke="#8c8c8c" stroke-width="1.3"/>
<line x1="324.72" y1="731.5" x2="324.72" y2="940.9" stroke="#8c8c8c" stroke-width="1.3"/>
<line x1="361.43" y1="731.5" x2="361.43" y2="940.9" stroke="#8c8c8c" stroke-width="1.3"/>
<line x1="398.14" y1="731.5" x2="398.14" y2="940.9" stroke="#8c8c8c" stroke-width="1.3"/>
<line x1="434.85" y1="731.5" x2="434.85" y2="940.9" stroke="#8c8c8c" stroke-width="1.3"/>
<line x1="471.56" y1="731.5" x2="471.56" y2="940.9" stroke="#8c8c8c" stroke-width="1.3"/>
<line x1="508.27" y1="731.5" x2="508.27" y2="940.9" stroke="#8c8c8c" stroke-width="1.3"/>
<line x1="544.98" y1="731.5" x2="544.98" y2="940.9" stroke="#8c8c8c" stroke-width="1.3"/>
<line x1="581.69" y1="731.5" x2="581.69" y2="940.9" stroke="#8c8c8c" stroke-width="1.3"/>
<line x1="618.40" y1="731.5" x2="618.40" y2="940.9" stroke="#8c8c8c" stroke-width="1.3"/>
<line x1="655.11" y1="731.5" x2="655.11" y2="940.9" stroke="#8c8c8c" stroke-width="1.3"/>
<line x1="691.82" y1="731.5" x2="691.82" y2="940.9" stroke="#8c8c8c" stroke-width="1.3"/>
<line x1="238.5" y1="940.9" x2="721" y2="940.9" stroke="#777" stroke-width="2"/>
<line x1="238.5" y1="731.5" x2="238.5" y2="940.9" stroke="#777" stroke-width="1.4"/>
<line x1="721" y1="731.5" x2="721" y2="940.9" stroke="#8c8c8c" stroke-width="1.3"/>
<polyline points="469.0,731.5 452.1,741.3 403.3,750.6 336.5,764.5 276.6,787.3 255.3,810.6 304.9,834.4 404.7,857.6 505.0,881.4 531.4,932.1" fill="none" stroke="#ff2020" stroke-width="1.5"/>
<rect x="450.6" y="739.8" width="3" height="3" fill="#ff2020"/>
<rect x="401.8" y="749.1" width="3" height="3" fill="#ff2020"/>
<rect x="335.0" y="763.0" width="3" height="3" fill="#ff2020"/>
<rect x="275.1" y="785.8" width="3" height="3" fill="#ff2020"/>
<rect x="253.8" y="809.1" width="3" height="3" fill="#ff2020"/>
<rect x="303.4" y="832.9" width="3" height="3" fill="#ff2020"/>
<rect x="403.2" y="856.1" width="3" height="3" fill="#ff2020"/>
<rect x="503.5" y="879.9" width="3" height="3" fill="#ff2020"/>
<rect x="529.9" y="930.6" width="3" height="3" fill="#ff2020"/>
<line x1="235" y1="731.5" x2="238.5" y2="731.5" stroke="#777" stroke-width="1.2"/>
<text x="234.5" y="735.1" text-anchor="end" font-size="10px" letter-spacing="0.55" fill="#111">0</text>
<line x1="235" y1="754.8" x2="238.5" y2="754.8" stroke="#777" stroke-width="1.2"/>
<text x="234.5" y="758.4" text-anchor="end" font-size="10px" letter-spacing="0.55" fill="#111">-50,000</text>
<line x1="235" y1="778.0" x2="238.5" y2="778.0" stroke="#777" stroke-width="1.2"/>
<text x="234.5" y="781.6" text-anchor="end" font-size="10px" letter-spacing="0.55" fill="#111">-100,000</text>
<line x1="235" y1="801.3" x2="238.5" y2="801.3" stroke="#777" stroke-width="1.2"/>
<text x="234.5" y="804.9" text-anchor="end" font-size="10px" letter-spacing="0.55" fill="#111">-150,000</text>
<line x1="235" y1="824.6" x2="238.5" y2="824.6" stroke="#777" stroke-width="1.2"/>
<text x="234.5" y="828.2" text-anchor="end" font-size="10px" letter-spacing="0.55" fill="#111">-200,000</text>
<line x1="235" y1="847.9" x2="238.5" y2="847.9" stroke="#777" stroke-width="1.2"/>
<text x="234.5" y="851.5" text-anchor="end" font-size="10px" letter-spacing="0.55" fill="#111">-250,000</text>
<line x1="235" y1="871.1" x2="238.5" y2="871.1" stroke="#777" stroke-width="1.2"/>
<text x="234.5" y="874.7" text-anchor="end" font-size="10px" letter-spacing="0.55" fill="#111">-300,000</text>
<line x1="235" y1="894.4" x2="238.5" y2="894.4" stroke="#777" stroke-width="1.2"/>
<text x="234.5" y="898.0" text-anchor="end" font-size="10px" letter-spacing="0.55" fill="#111">-350,000</text>
<line x1="235" y1="917.7" x2="238.5" y2="917.7" stroke="#777" stroke-width="1.2"/>
<text x="234.5" y="921.3" text-anchor="end" font-size="10px" letter-spacing="0.55" fill="#111">-400,000</text>
<line x1="235" y1="940.9" x2="238.5" y2="940.9" stroke="#777" stroke-width="1.2"/>
<text x="234.5" y="944.5" text-anchor="end" font-size="10px" letter-spacing="0.55" fill="#111">-450,000</text>
<line x1="251.3" y1="940.9" x2="251.3" y2="943.9" stroke="#777" stroke-width="1.2"/>
<text x="251.3" y="954.6" text-anchor="middle" font-size="10px" letter-spacing="0.5" fill="#111">-6</text>
<line x1="288.0" y1="940.9" x2="288.0" y2="943.9" stroke="#777" stroke-width="1.2"/>
<text x="288.0" y="954.6" text-anchor="middle" font-size="10px" letter-spacing="0.5" fill="#111">-5</text>
<line x1="324.7" y1="940.9" x2="324.7" y2="943.9" stroke="#777" stroke-width="1.2"/>
<text x="324.7" y="954.6" text-anchor="middle" font-size="10px" letter-spacing="0.5" fill="#111">-4</text>
<line x1="361.4" y1="940.9" x2="361.4" y2="943.9" stroke="#777" stroke-width="1.2"/>
<text x="361.4" y="954.6" text-anchor="middle" font-size="10px" letter-spacing="0.5" fill="#111">-3</text>
<line x1="398.1" y1="940.9" x2="398.1" y2="943.9" stroke="#777" stroke-width="1.2"/>
<text x="398.1" y="954.6" text-anchor="middle" font-size="10px" letter-spacing="0.5" fill="#111">-2</text>
<line x1="434.9" y1="940.9" x2="434.9" y2="943.9" stroke="#777" stroke-width="1.2"/>
<text x="434.9" y="954.6" text-anchor="middle" font-size="10px" letter-spacing="0.5" fill="#111">-1</text>
<line x1="471.6" y1="940.9" x2="471.6" y2="943.9" stroke="#777" stroke-width="1.2"/>
<text x="471.6" y="954.6" text-anchor="middle" font-size="10px" letter-spacing="0.5" fill="#111">0</text>
<line x1="508.3" y1="940.9" x2="508.3" y2="943.9" stroke="#777" stroke-width="1.2"/>
<text x="508.3" y="954.6" text-anchor="middle" font-size="10px" letter-spacing="0.5" fill="#111">1</text>
<line x1="545.0" y1="940.9" x2="545.0" y2="943.9" stroke="#777" stroke-width="1.2"/>
<text x="545.0" y="954.6" text-anchor="middle" font-size="10px" letter-spacing="0.5" fill="#111">2</text>
<line x1="581.7" y1="940.9" x2="581.7" y2="943.9" stroke="#777" stroke-width="1.2"/>
<text x="581.7" y="954.6" text-anchor="middle" font-size="10px" letter-spacing="0.5" fill="#111">3</text>
<line x1="618.4" y1="940.9" x2="618.4" y2="943.9" stroke="#777" stroke-width="1.2"/>
<text x="618.4" y="954.6" text-anchor="middle" font-size="10px" letter-spacing="0.5" fill="#111">4</text>
<line x1="655.1" y1="940.9" x2="655.1" y2="943.9" stroke="#777" stroke-width="1.2"/>
<text x="655.1" y="954.6" text-anchor="middle" font-size="10px" letter-spacing="0.5" fill="#111">5</text>
<line x1="691.8" y1="940.9" x2="691.8" y2="943.9" stroke="#777" stroke-width="1.2"/>
<text x="691.8" y="954.6" text-anchor="middle" font-size="10px" letter-spacing="0.5" fill="#111">6</text>
<text x="467.5" y="972" font-size="12px" letter-spacing="0.3" fill="#111">vp []</text>
<text transform="translate(181.5,870) rotate(-90)" font-size="12px" letter-spacing="0.6" fill="#111">Altitude (m)</text>
<text x="443" y="722.7" text-anchor="middle" font-size="18px" font-weight="bold" letter-spacing="0.9" fill="#111">Vertical Profile</text>
<rect x="430.5" y="982.5" width="27" height="21" fill="#eeeeee" stroke="#111" stroke-width="1"/>
<rect x="434" y="991.5" width="3" height="3" fill="none" stroke="#ff4040" stroke-width="0.8"/>
<text x="440" y="998" font-size="12px" fill="#111">vp</text>
</svg>


</body></html>
